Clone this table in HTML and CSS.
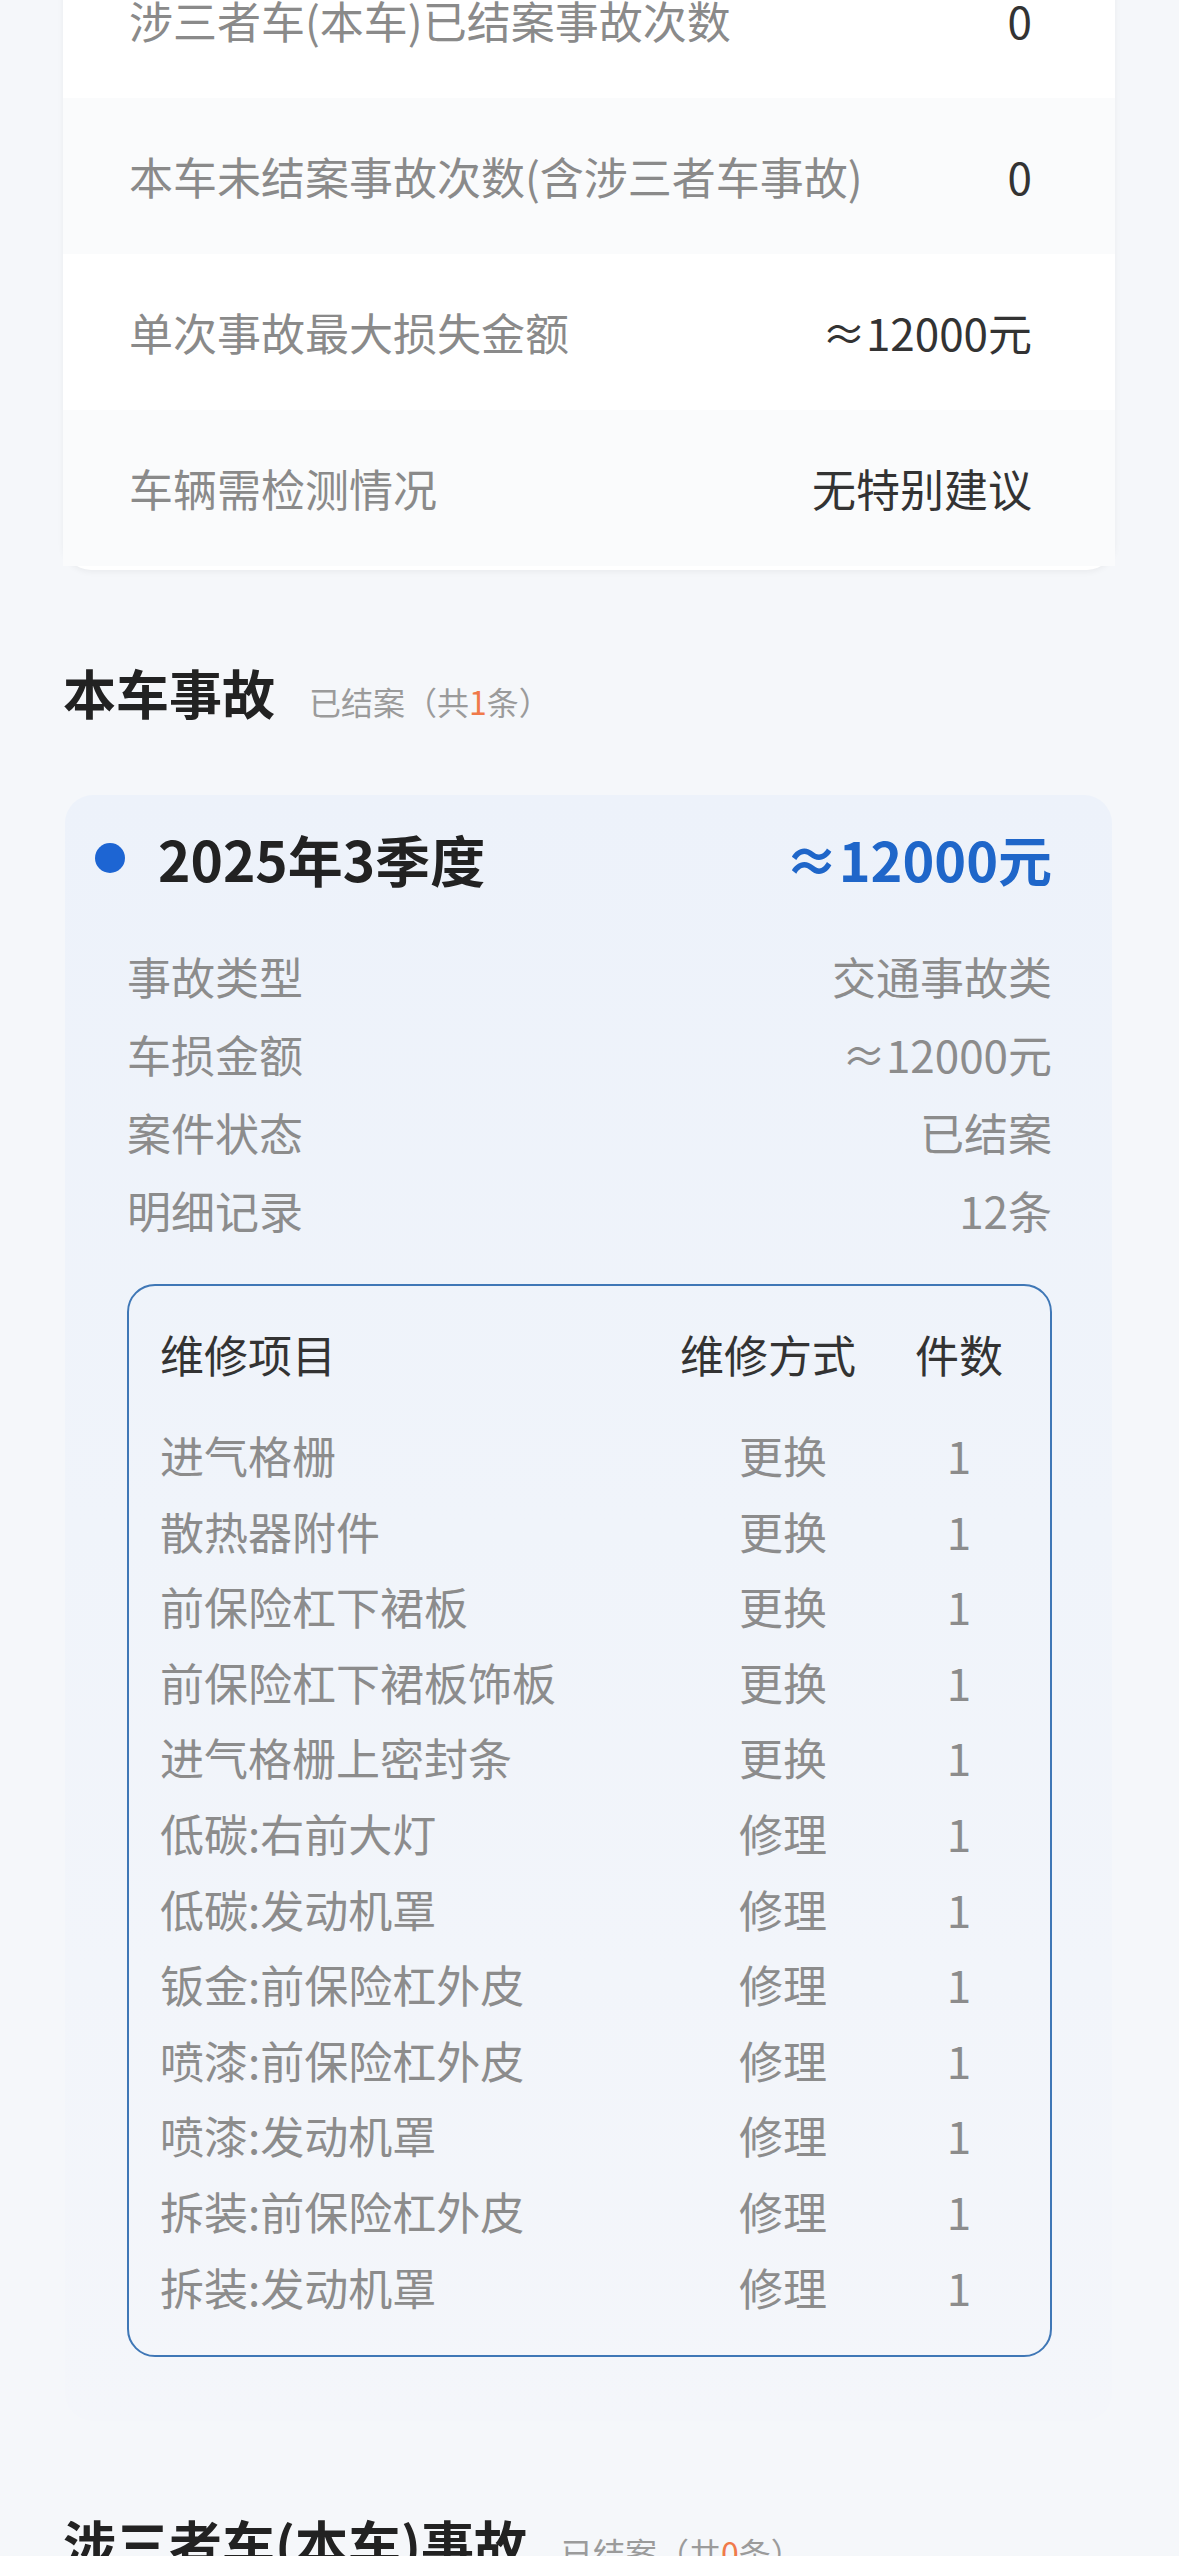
FILE: index.html
```html
<!DOCTYPE html>
<html lang="zh-CN">

<head>
    <meta charset="UTF-8">
    <meta name="viewport" content="width=device-width, initial-scale=1.0">
    <title>出险记录</title>
    <link rel="stylesheet" href="styles.css">
</head>

<body>
    <div class="page">
        <!-- 事故概况 -->
        <div class="stats">
            <div class="stat-row">
                <span class="stat-label">涉三者车(本车)已结案事故次数</span>
                <span class="stat-value">0</span>
            </div>
            <div class="stat-row">
                <span class="stat-label">本车未结案事故次数(含涉三者车事故)</span>
                <span class="stat-value">0</span>
            </div>
            <div class="stat-row">
                <span class="stat-label">单次事故最大损失金额</span>
                <span class="stat-value">≈12000元</span>
            </div>
            <div class="stat-row">
                <span class="stat-label">车辆需检测情况</span>
                <span class="stat-value">无特别建议</span>
            </div>
        </div>

        <div class="section-head">
            <h2>本车事故</h2>
            <span class="section-sub">已结案（共<em>1</em>条）</span>
        </div>

        <div class="accident">
            <div class="accident-head">
                <span class="dot"></span>
                <span class="period">2025年3季度</span>
                <span class="amount">≈12000元</span>
            </div>
            <div class="info-row"><span>事故类型</span><span>交通事故类</span></div>
            <div class="info-row"><span>车损金额</span><span>≈12000元</span></div>
            <div class="info-row"><span>案件状态</span><span>已结案</span></div>
            <div class="info-row"><span>明细记录</span><span>12条</span></div>

            <div class="repair">
                <div class="repair-row repair-head">
                    <span>维修项目</span><span class="way">维修方式</span><span class="num">件数</span>
                </div>
                <div class="repair-row"><span>进气格栅</span><span class="way">更换</span><span class="num">1</span></div>
                <div class="repair-row"><span>散热器附件</span><span class="way">更换</span><span class="num">1</span></div>
                <div class="repair-row"><span>前保险杠下裙板</span><span class="way">更换</span><span class="num">1</span></div>
                <div class="repair-row"><span>前保险杠下裙板饰板</span><span class="way">更换</span><span class="num">1</span></div>
                <div class="repair-row"><span>进气格栅上密封条</span><span class="way">更换</span><span class="num">1</span></div>
                <div class="repair-row"><span>低碳:右前大灯</span><span class="way">修理</span><span class="num">1</span></div>
                <div class="repair-row"><span>低碳:发动机罩</span><span class="way">修理</span><span class="num">1</span></div>
                <div class="repair-row"><span>钣金:前保险杠外皮</span><span class="way">修理</span><span class="num">1</span></div>
                <div class="repair-row"><span>喷漆:前保险杠外皮</span><span class="way">修理</span><span class="num">1</span></div>
                <div class="repair-row"><span>喷漆:发动机罩</span><span class="way">修理</span><span class="num">1</span></div>
                <div class="repair-row"><span>拆装:前保险杠外皮</span><span class="way">修理</span><span class="num">1</span></div>
                <div class="repair-row"><span>拆装:发动机罩</span><span class="way">修理</span><span class="num">1</span></div>
            </div>
        </div>

        <div class="section-head">
            <h2>涉三者车(本车)事故</h2>
            <span class="section-sub">已结案（共<em>0</em>条）</span>
        </div>
    </div>
</body>

</html>
```

FILE: styles.css
```css
body {
    font-family: "Noto Sans CJK SC", "Noto Sans", sans-serif;
    background-color: #f5f7fa;
    margin: 0;
    color: #333;
    overflow: hidden;
}

.page {
    padding: 0 64px 0 63px;
}

/* 概况卡片 */
.stats {
    margin-top: -58px;
    background-color: #fff;
    border-radius: 28px;
    box-shadow: 0 2px 6px rgba(0, 0, 0, 0.05);
    padding-bottom: 4px;
}

.stat-row {
    display: flex;
    justify-content: space-between;
    align-items: center;
    height: 156px;
    padding: 0 83px 0 66px;
    font-size: 44px;
}

.stat-row:nth-child(even) {
    background-color: #fafbfc;
}

.stat-label {
    color: #8a8a8a;
}

.stat-value {
    color: #333;
}

/* 分组标题 */
.section-head {
    display: flex;
    align-items: baseline;
    margin-top: 92px;
    height: 60px;
}

.section-head h2 {
    margin: 0;
    font-size: 53px;
    line-height: 60px;
    font-weight: 700;
    color: #222;
}

.section-sub {
    margin-left: 34px;
    font-size: 32px;
    color: #9b9b9b;
}

.section-sub em {
    font-style: normal;
    color: #f07a4a;
}

/* 事故卡片 */
.accident {
    margin-top: 73px;
    margin-left: 2px;
    margin-right: 3px;
    padding: 33px 60px 64px 62px;
    border-radius: 28px;
    background: linear-gradient(180deg, #edf2fa 0%, #f0f4fa 45%, #f4f6fa 100%);
}

.accident-head {
    display: flex;
    align-items: center;
    height: 60px;
    margin-left: -32px;
    margin-bottom: 49px;
}

.dot {
    width: 30px;
    height: 30px;
    border-radius: 50%;
    background-color: #1d65d3;
    margin-right: 33px;
}

.period {
    flex: 1;
    font-size: 55px;
    font-weight: 700;
    color: #222;
}

.amount {
    font-size: 54px;
    font-weight: 700;
    color: #1f66c9;
}

.info-row {
    display: flex;
    justify-content: space-between;
    height: 78px;
    line-height: 78px;
    font-size: 44px;
    color: #8c8c8c;
}

/* 维修明细 */
.repair {
    margin-top: 35px;
    border: 2px solid #3f77b6;
    border-radius: 28px;
    padding: 38px 46px 30px 31px;
}

.repair-row {
    display: grid;
    grid-template-columns: 1fr 176px 90px;
    column-gap: 58px;
    height: 75.6px;
    line-height: 75.6px;
    font-size: 44px;
    color: #8c8c8c;
    white-space: nowrap;
}

.repair-row .way {
    text-align: center;
    padding-left: 30px;
}

.repair-row .num {
    text-align: center;
}

.repair-head {
    height: 60px;
    line-height: 60px;
    margin-bottom: 34px;
    color: #333;
}

.repair-head .way {
    padding-left: 0;
}
```
